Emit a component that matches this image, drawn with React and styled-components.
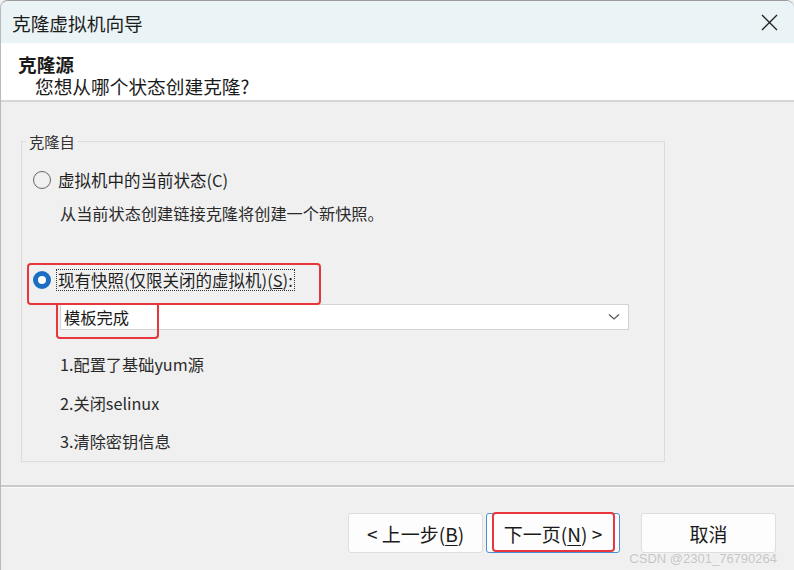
import React, { useState } from "react";
import styled, { createGlobalStyle } from "styled-components";

const GlobalStyle = createGlobalStyle`
    html, body {
        margin: 0;
        padding: 0;
        background: #f0f0f0;
    }
    body {
        font-family: "Noto Sans CJK SC", "Noto Sans", sans-serif;
        color: #1a1a1a;
    }
`;

const Window = styled.div`
    //레이아웃
    position: relative;
    width: 794px;
    height: 570px;
    overflow: hidden;

    display: flex;
    flex-direction: column;

    //스타일
    background-color: #f0f0f0;
    border-left: 1px solid #b9b9b9;
    border-top: 1px solid #9a9a9a;
    border-radius: 8px 8px 0 0;
    box-sizing: border-box;
`;

const TitleBar = styled.div`
    height: 42px;
    flex-shrink: 0;
    display: flex;
    align-items: center;
    justify-content: space-between;
    padding: 0 14px 0 11px;
    background-color: #eaf3f6;

    & .title {
        font-size: 18.7px;
        color: #1c1c1c;
    }
`;

const CloseButton = styled.div`
    width: 22px;
    height: 22px;
    display: flex;
    align-items: center;
    justify-content: center;
`;

const Header = styled.div`
    height: 59px;
    flex-shrink: 0;
    box-sizing: border-box;
    display: flex;
    flex-direction: column;
    padding: 11px 0 0 17px;
    background-color: #ffffff;
    border-bottom: 2px solid #d6d6d6;

    & .heading {
        font-size: 18.7px;
        font-weight: 700;
        line-height: 20px;
        height: 20px;
    }

    & .sub {
        font-size: 18.7px;
        line-height: 24px;
        height: 24px;
        padding-left: 17px;
    }
`;

const Body = styled.div`
    flex: 1;
    padding: 29px 0 0 20px;
    border-bottom: 2px solid #cacaca;
`;

const GroupBox = styled.fieldset`
    width: 644px;
    margin: 0;
    padding: 0 0 8px 0;
    box-sizing: border-box;
    border: 1px solid #dcdcdc;

    & legend {
        padding: 0 3px;
        margin-left: 4px;
        font-size: 15.3px;
        line-height: 20px;
        color: #333;
    }
`;

const RadioRow = styled.label`
    display: flex;
    align-items: center;
    gap: 5px;
    height: 24px;
    margin: ${p => p.$top}px 0 0 11px;
    font-size: 16.5px;
    color: #1e1e1e;
`;

const RadioDot = styled.span`
    width: 18px;
    height: 18px;
    border-radius: 50%;
    box-sizing: border-box;
    flex-shrink: 0;
    border: ${p => (p.$checked ? "5px solid #1b6ec2" : "1.5px solid #666")};
    background: ${p => (p.$checked ? "#fff" : "transparent")};
`;

const RadioText = styled.span`
    padding: 0 1px;
    line-height: 20px;
    border: 1px ${p => (p.$focus ? "dotted #333" : "solid transparent")};
`;

const Line = styled.div`
    margin: ${p => p.$top}px 0 0 38px;
    font-size: 16.2px;
    line-height: 24px;
    color: #2a2a2a;
`;

const Select = styled.div`
    width: 569px;
    height: 26px;
    margin: 12px 0 0 38px;
    box-sizing: border-box;
    padding: 0 8px 0 3px;
    display: flex;
    align-items: center;
    justify-content: space-between;
    background: #fff;
    border: 1px solid #d3d3d3;
    font-size: 16.3px;
`;

const Footer = styled.div`
    height: 83px;
    flex-shrink: 0;
    border-top: 1px solid #fafafa;
    display: flex;
    justify-content: flex-end;
    align-items: flex-start;
    padding: 25px 18px 0 0;
    box-sizing: border-box;
`;

const Button = styled.div`
    width: ${p => p.$w || 135}px;
    height: 40px;
    margin-left: ${p => p.$gap || 0}px;
    box-sizing: border-box;
    display: flex;
    align-items: center;
    justify-content: center;
    background: #fdfdfd;
    border: 1px solid ${p => (p.$primary ? "#4a90d9" : "#dedede")};
    border-radius: 3px;
    font-size: 19px;
    color: #1a1a1a;

    & u {
        text-underline-offset: 3px;
    }
`;

const Mark = styled.div`
    position: absolute;
    left: ${p => p.$x}px;
    top: ${p => p.$y}px;
    width: ${p => p.$w}px;
    height: ${p => p.$h}px;
    box-sizing: border-box;
    border: 2px solid #e8363c;
    border-top-width: ${p => (p.$noTop ? 0 : 2)}px;
    border-radius: ${p => (p.$noTop ? "0 0 4px 4px" : "4px")};
    pointer-events: none;
`;

const Watermark = styled.div`
    position: absolute;
    right: 17px;
    bottom: 4px;
    font-family: "Liberation Sans", Arial, sans-serif;
    font-size: 13px;
    color: #c4c4c4;
    text-shadow: 0 0 1px #fff;
`;

export default function App() {
    const [choice, setChoice] = useState("snapshot");

    return (
        <>
        <GlobalStyle />
        <Window>
            <TitleBar>
                <span className="title">克隆虚拟机向导</span>
                <CloseButton>
                    <svg width="17" height="17" viewBox="0 0 17 17">
                        <path d="M1 1 L16 16 M16 1 L1 16" stroke="#1f1f1f" strokeWidth="1.3" fill="none" />
                    </svg>
                </CloseButton>
            </TitleBar>

            <Header>
                <div className="heading">克隆源</div>
                <div className="sub">您想从哪个状态创建克隆?</div>
            </Header>

            <Body>
                <GroupBox>
                    <legend>克隆自</legend>

                    <RadioRow $top={17} onClick={() => setChoice("current")}>
                        <RadioDot $checked={choice === "current"} />
                        <RadioText>虚拟机中的当前状态(C)</RadioText>
                    </RadioRow>
                    <Line $top={9}>从当前状态创建链接克隆将创建一个新快照。</Line>

                    <RadioRow $top={43} onClick={() => setChoice("snapshot")}>
                        <RadioDot $checked={choice === "snapshot"} />
                        <RadioText $focus>现有快照(仅限关闭的虚拟机)(<u>S</u>):</RadioText>
                    </RadioRow>

                    <Select>
                        <span>模板完成</span>
                        <svg width="12" height="8" viewBox="0 0 12 8">
                            <path d="M1 1.5 L6 6 L11 1.5" stroke="#555" strokeWidth="1.2" fill="none" />
                        </svg>
                    </Select>

                    <Line $top={22}>1.配置了基础yum源</Line>
                    <Line $top={15}>2.关闭selinux</Line>
                    <Line $top={14}>3.清除密钥信息</Line>
                </GroupBox>
            </Body>

            <Footer>
                <Button>&lt; 上一步(<u>B</u>)</Button>
                <Button $gap={3} $w={134} $primary>下一页(<u>N</u>) &gt;</Button>
                <Button $gap={21}>取消</Button>
            </Footer>

            <Mark $x={26} $y={262} $w={294} $h={42} />
            <Mark $x={55} $y={304} $w={103} $h={34} $noTop />
            <Mark $x={491} $y={511} $w={123} $h={40} />

            <Watermark>CSDN @2301_76790264</Watermark>
        </Window>
        </>
    );
}
